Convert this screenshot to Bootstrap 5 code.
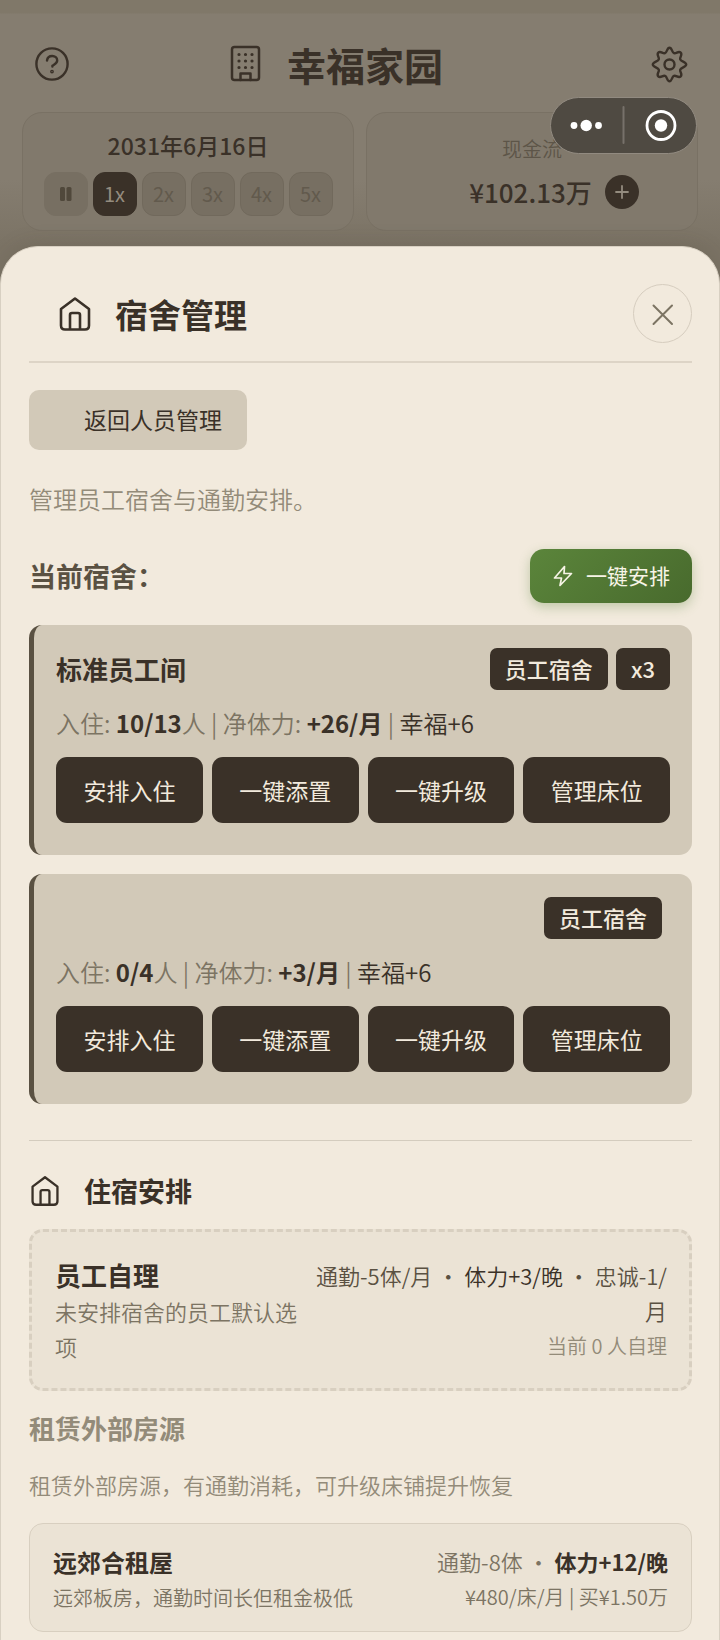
<!DOCTYPE html>
<html lang="zh-CN">
<head>
<meta charset="utf-8">
<meta name="viewport" content="width=device-width, initial-scale=1">
<title>幸福家园 - 宿舍管理</title>
<link rel="stylesheet" href="https://cdn.jsdelivr.net/npm/bootstrap@5.3.0/dist/css/bootstrap.min.css">
<style>
  :root { --ink: #3a3128; --paper: #f2eadd; --sand: #d2c9b8; --olive: #5a5142; --stone: #7c7463; --mute: #938b79; --line: #ddd4c6; }
  body { font-family: "Noto Sans CJK SC", sans-serif; color: var(--ink); background: #857d70; font-weight: 350; }
  b { font-weight: 700; color: var(--ink); }
  svg { display: block; fill: none; stroke: currentColor; stroke-linecap: round; stroke-linejoin: round; }
  .screen { background: linear-gradient(#807869 0 13px, #857d70 14px 180px, #7b7365 246px); }
  .icon-btn { background: none; border: 0; padding: 0; color: var(--ink); }
  .app-head { padding: 35px 32px 19px 32px; }
  .app-title { font-size: 39px; line-height: 58px; font-weight: 700; gap: 25px; padding-right: 52px; }
  .stats { display: grid; grid-template-columns: 1fr 1fr; gap: 12px; padding: 0 22px; margin-bottom: 15px; }
  .stat { border: 1px solid #797164; border-radius: 20px; height: 119px; background: #81796c; }
  .date { font-size: 23px; line-height: 36px; font-weight: 500; margin: 14px 0 9px; }
  .speed { width: 44px; height: 44px; border-radius: 12px; border: 1px solid #71695c; background: #776f62; color: #625a4d; font-size: 20px; line-height: 40px; padding: 0; }
  .speed-on { background: #3a3128; border-color: #3a3128; color: #948c7f; }
  .speed-pause { border-color: #776f62; color: #50483b; }
  .speeds { gap: 5px; }
  .cash-label { font-size: 20px; line-height: 30px; color: #5d5548; margin-top: 21px; }
  .cash { font-size: 26px; line-height: 38px; font-weight: 500; gap: 13px; margin-top: 9px; padding-left: 44px; }
  .plus { width: 34px; height: 34px; border-radius: 50%; background: #3a3128; color: #948c7f; }
  .capsule { top: 97px; right: 23px; width: 147px; height: 57px; border-radius: 29px; background: #4f4a42; border: 1px solid #918a80; }
  .sheet { background: var(--paper); border: 1px solid #d8d0c2; border-bottom: 0; border-radius: 38px 38px 0 0; padding: 0 27px 6px 28px; box-shadow: 0 -4px 20px #4038291f; }
  .sheet-head { border-bottom: 2px solid var(--line); padding: 37px 0 18px 28px; }
  .sheet-title { font-size: 33px; line-height: 58px; font-weight: 700; gap: 22px; }
  .close-x { width: 59px; height: 59px; border: 1px solid #d6cdbf; border-radius: 50%; color: var(--stone); }
  .back { font-size: 23px; line-height: 34px; padding: 12px 25px 14px 55px; border: 0; border-radius: 10px; background: var(--sand); color: var(--ink); margin-top: 27px; }
  .intro { font-size: 24px; line-height: 36px; color: var(--mute); margin: 31px 0 32px; }
  .section-name { font-size: 27px; line-height: 40px; font-weight: 700; color: var(--olive); }
  .current { margin-bottom: 22px; }
  .auto { height: 54px; padding: 0 22px 0 23px; border: 0; border-radius: 14px; background: linear-gradient(135deg, #5b853b, #486a2d); color: #f7f4e6; font-size: 21px; gap: 13px; box-shadow: 0 4px 12px #5b853b55; }
  .dorm { background: var(--sand); border-left: 5px solid var(--olive); border-radius: 13px; padding: 23px 22px 32px; }
  .dorm + .dorm { margin-top: 19px; }
  .dorm-name { font-size: 26px; line-height: 42px; font-weight: 700; }
  .tag { font-size: 22px; line-height: 32px; font-weight: 500; padding: 4px 15px 6px; border-radius: 7px; background: var(--ink); color: var(--paper); }
  .facts { font-size: 24px; line-height: 36px; color: var(--stone); margin: 15px 0 16px; }
  .facts span { color: var(--ink); }
  .acts { display: grid; grid-template-columns: repeat(4, 1fr); gap: 9px; }
  .act { height: 66px; border: 0; border-radius: 11px; background: var(--ink); color: var(--paper); font-size: 23px; padding: 0; }
  .cut { border-top: 1px solid #d4ccbe; margin-top: 36px; padding-top: 30px; }
  .arrange { font-size: 27px; line-height: 40px; font-weight: 700; gap: 23px; }
  .option { display: grid; background: #ebe3d5; border-radius: 14px; }
  .self { grid-template-columns: 41% 59%; border: 3px dashed #d8cfc0; padding: 24px 22px 24px 23px; margin-top: 18px; }
  .self-name { font-size: 26px; line-height: 38px; font-weight: 700; }
  .t22 { font-size: 22px; line-height: 35px; }
  .t20 { font-size: 20px; line-height: 35px; }
  .ink { color: var(--ink); } .stone { color: var(--stone); } .olive { color: var(--olive); } .mute { color: var(--mute); }
  .rent-title { font-size: 26px; line-height: 38px; font-weight: 700; color: var(--mute); margin: 18px 0 20px; }
  .rental { grid-template-columns: auto auto; border: 1px solid #d8cfc0; padding: 20px 23px 16px; margin-top: 21px; }
  .rental-name { font-size: 24px; line-height: 36px; font-weight: 700; }
</style>
</head>
<body>
<div class="screen d-flex flex-column min-vh-100 position-relative">
  <header class="app-head d-flex align-items-center justify-content-between">
    <button class="icon-btn" type="button" aria-label="帮助">
      <svg width="40" height="40" viewBox="0 0 40 40" stroke-width="2.4"><circle cx="20" cy="20" r="15.6"/><path d="M15 16.5c.4-3 2.500-4.500 5.200-4.500 2.800 0 5 1.800 5 4.400 0 3-2.800 3.800-4.800 5.400v.7"/><circle cx="20" cy="27.600" r=".7"/></svg>
    </button>
    <h1 class="app-title d-flex align-items-center mb-0">
      <svg width="34" height="40" viewBox="0 0 34 40" stroke-width="2.500"><rect x="4" y="3" width="27" height="33" rx="2.500"/><path d="M12.500 36v-6.500h10V36"/><path stroke-width="3.200" d="M11 10.500h.01M17.500 10.500h.01M24 10.500h.01M11 17h.01M17.500 17h.01M24 17h.01M11 23.500h.01M17.500 23.500h.01M24 23.500h.01"/></svg>
      <span>幸福家园</span>
    </h1>
    <button class="icon-btn" type="button" aria-label="设置">
      <svg width="37" height="37" viewBox="0 0 37 37" stroke-width="2.400"><circle cx="18.500" cy="18.500" r="5"/><path d="M18.500 1.800c2.600 0 2.200 4.500 4.500 5.300 2.200.8 4.500-2.700 6.700-.5 2.200 2.200-1.300 4.500-.5 6.700.8 2.300 6 2.600 6 5.200s-5.200 2.900-6 5.200c-.8 2.200 2.700 4.500.5 6.700-2.200 2.200-4.500-1.300-6.700-.5-2.300.8-1.900 5.300-4.500 5.300s-2.200-4.500-4.500-5.300c-2.200-.8-4.500 2.700-6.700.5-2.200-2.200 1.300-4.500.5-6.700-.8-2.300-6-2.600-6-5.200s5.200-2.900 6-5.200c.8-2.200-2.700-4.500-.5-6.700 2.200-2.200 4.500 1.300 6.700.5 2.300-.8 1.900-5.300 4.500-5.300z"/></svg>
    </button>
  </header>

  <section class="stats">
    <div class="stat text-center">
      <p class="date">2031年6月16日</p>
      <div class="speeds d-flex justify-content-center">
        <button class="speed speed-pause d-flex align-items-center justify-content-center" type="button" aria-label="暂停"><svg width="14" height="16" viewBox="0 0 14 16"><g fill="currentColor" stroke="none"><rect x="1" y="1" width="5" height="14" rx="1.500"/><rect x="7.500" y="1" width="5" height="14" rx="1.500"/></g></svg></button>
        <button class="speed speed-on" type="button">1x</button>
        <button class="speed" type="button">2x</button>
        <button class="speed" type="button">3x</button>
        <button class="speed" type="button">4x</button>
        <button class="speed" type="button">5x</button>
      </div>
    </div>
    <div class="stat text-center">
      <p class="cash-label mb-0">现金流</p>
      <div class="cash d-flex align-items-center justify-content-center">
        <span>¥102.13万</span>
        <button class="icon-btn plus d-flex align-items-center justify-content-center" type="button" aria-label="增加"><svg width="16" height="16" viewBox="0 0 16 16" stroke-width="1.800"><path d="M8 2v12M2 8h12"/></svg></button>
      </div>
    </div>
  </section>

  <div class="capsule position-absolute">
    <svg width="145" height="55" viewBox="0 0 145 55"><g fill="#fff" stroke="none"><circle cx="23" cy="27.500" r="3.400"/><circle cx="35.200" cy="27.500" r="5.700"/><circle cx="47.500" cy="27.500" r="3.400"/><circle cx="110" cy="27.500" r="6.200"/></g><path stroke="#77716a" stroke-width="2" d="M72.500 9v36"/><circle cx="110" cy="27.500" r="14" stroke="#fff" stroke-width="2.800"/></svg>
  </div>

  <main class="sheet flex-grow-1">
    <div class="sheet-head d-flex justify-content-between align-items-center">
      <h2 class="sheet-title d-flex align-items-center mb-0">
        <svg width="36" height="36" viewBox="0 0 36 36" stroke-width="2.600"><path d="M4 13 18 2.500 32 13v16.500q0 4-4 4H8q-4 0-4-4zM13 33V19q0-2 2-2h6q2 0 2 2v14"/></svg>
        <span>宿舍管理</span>
      </h2>
      <button class="icon-btn close-x d-flex align-items-center justify-content-center" type="button" aria-label="关闭"><svg width="24" height="24" viewBox="0 0 24 24" stroke-width="2"><path d="m2.500 3.500 18.500 18.500M21 3.500 2.500 22"/></svg></button>
    </div>

    <button class="back d-block" type="button">返回人员管理</button>
    <p class="intro">管理员工宿舍与通勤安排。</p>

    <div class="current d-flex justify-content-between align-items-center">
      <h3 class="section-name mb-0">当前宿舍：</h3>
      <button class="auto d-flex align-items-center" type="button">
        <svg width="20" height="22" viewBox="0 0 20 22" stroke-width="1.700"><path d="M11.500 1.500 1.500 13h7L7 20.500 18.500 8.500h-7.500z"/></svg>
        <span>一键安排</span>
      </button>
    </div>

    <article class="dorm">
      <div class="d-flex justify-content-between">
        <h4 class="dorm-name mb-0">标准员工间</h4>
        <div class="d-flex gap-2"><span class="tag">员工宿舍</span><span class="tag">x3</span></div>
      </div>
      <p class="facts">入住: <b>10/13</b>人 | 净体力: <b>+26/月</b> | <span>幸福+6</span></p>
      <div class="acts">
        <button class="act" type="button">安排入住</button>
        <button class="act" type="button">一键添置</button>
        <button class="act" type="button">一键升级</button>
        <button class="act" type="button">管理床位</button>
      </div>
    </article>

    <article class="dorm">
      <div class="d-flex justify-content-end gap-2"><span class="tag">员工宿舍</span><span></span></div>
      <p class="facts">入住: <b>0/4</b>人 | 净体力: <b>+3/月</b> | <span>幸福+6</span></p>
      <div class="acts">
        <button class="act" type="button">安排入住</button>
        <button class="act" type="button">一键添置</button>
        <button class="act" type="button">一键升级</button>
        <button class="act" type="button">管理床位</button>
      </div>
    </article>

    <section class="cut">
      <h3 class="arrange d-flex align-items-center mb-0">
        <svg width="32" height="32" viewBox="0 0 36 36" stroke-width="2.600"><path d="M4 13 18 2.500 32 13v16.500q0 4-4 4H8q-4 0-4-4zM13 33V19q0-2 2-2h6q2 0 2 2v14"/></svg>
        <span>住宿安排</span>
      </h3>
      <div class="option self align-items-center">
        <div>
          <h4 class="self-name mb-0">员工自理</h4>
          <p class="t22 stone mb-0">未安排宿舍的员工默认选项</p>
        </div>
        <div class="text-end">
          <p class="t22 olive mb-0">通勤-5体/月 ・ <span class="ink">体力+3/晚</span> ・ 忠诚-1/月</p>
          <p class="t20 mute mb-0">当前 0 人自理</p>
        </div>
      </div>

      <h3 class="rent-title">租赁外部房源</h3>
      <p class="t22 mute mb-0">租赁外部房源，有通勤消耗，可升级床铺提升恢复</p>
      <div class="option rental">
        <div>
          <h4 class="rental-name mb-0">远郊合租屋</h4>
          <p class="t20 stone mb-0">远郊板房，通勤时间长但租金极低</p>
        </div>
        <div class="text-end">
          <p class="t22 stone mb-0">通勤-8体 ・ <b>体力+12/晚</b></p>
          <p class="t20 stone mb-0">¥480/床/月 | 买¥1.50万</p>
        </div>
      </div>
    </section>
  </main>
</div>
<script src="https://cdn.jsdelivr.net/npm/bootstrap@5.3.0/dist/js/bootstrap.bundle.min.js"></script>
</body>
</html>
